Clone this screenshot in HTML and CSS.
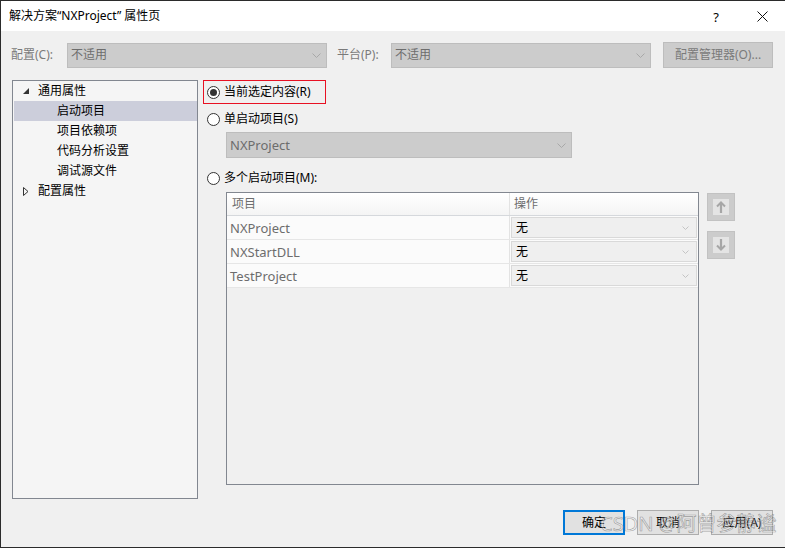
FILE: index.html
```html
<!DOCTYPE html>
<html lang="zh-CN">
<head>
<meta charset="utf-8">
<title>属性页</title>
<link rel="stylesheet" href="styles.css">
</head>
<body>
<div class="window">
  <div class="titlebar">
    <div class="title">解决方案“NXProject” 属性页</div>
    <div class="tb-btn help">?</div>
    <div class="tb-btn close"><svg width="11" height="11" viewBox="0 0 11 11"><path d="M0.5 0.5L10.5 10.5M10.5 0.5L0.5 10.5" stroke="#111" stroke-width="1" fill="none"/></svg></div>
  </div>

  <div class="toolbar">
    <span class="lbl lbl-config">配置(C):</span>
    <div class="combo combo-top"><span>不适用</span><svg class="chev" width="9" height="5" viewBox="0 0 9 5"><path d="M0.5 0.5L4.5 4.5L8.5 0.5" stroke="#a8a8a8" fill="none"/></svg></div>
    <span class="lbl lbl-platform">平台(P):</span>
    <div class="combo combo-top"><span>不适用</span><svg class="chev" width="9" height="5" viewBox="0 0 9 5"><path d="M0.5 0.5L4.5 4.5L8.5 0.5" stroke="#a8a8a8" fill="none"/></svg></div>
    <div class="btn-disabled">配置管理器(O)...</div>
  </div>

  <div class="main">
    <div class="tree">
      <div class="node">
        <span class="exp"><svg width="6" height="6" viewBox="0 0 6 6"><path d="M6 0L6 6L0 6Z" fill="#333"/></svg></span>
        <span>通用属性</span>
      </div>
      <div class="node child selected">启动项目</div>
      <div class="node child">项目依赖项</div>
      <div class="node child">代码分析设置</div>
      <div class="node child">调试源文件</div>
      <div class="node">
        <span class="exp"><svg width="6" height="9" viewBox="0 0 6 9"><path d="M0.5 0.5L5 4.5L0.5 8.5Z" fill="none" stroke="#333"/></svg></span>
        <span>配置属性</span>
      </div>
    </div>

    <div class="panel">
      <div class="red-box">
        <span class="radio checked"></span>
        <span class="radio-label">当前选定内容(R)</span>
      </div>
      <div class="radio-row row-single">
        <span class="radio"></span>
        <span class="radio-label">单启动项目(S)</span>
      </div>
      <div class="combo combo-project"><span>NXProject</span><svg class="chev" width="9" height="5" viewBox="0 0 9 5"><path d="M0.5 0.5L4.5 4.5L8.5 0.5" stroke="#a8a8a8" fill="none"/></svg></div>
      <div class="radio-row row-multi">
        <span class="radio"></span>
        <span class="radio-label">多个启动项目(M):</span>
      </div>

      <div class="grid-area">
        <div class="grid">
          <div class="grid-head">
            <div class="c1 hcell">项目</div>
            <div class="c2 hcell">操作</div>
          </div>
          <div class="grid-row">
            <div class="c1 cell">NXProject</div>
            <div class="c2 cell-combo"><div class="mini-combo"><span>无</span><svg width="7" height="4" viewBox="0 0 7 4"><path d="M0.5 0.5L3.5 3.5L6.5 0.5" stroke="#c4c4c4" fill="none"/></svg></div></div>
          </div>
          <div class="grid-row">
            <div class="c1 cell">NXStartDLL</div>
            <div class="c2 cell-combo"><div class="mini-combo"><span>无</span><svg width="7" height="4" viewBox="0 0 7 4"><path d="M0.5 0.5L3.5 3.5L6.5 0.5" stroke="#c4c4c4" fill="none"/></svg></div></div>
          </div>
          <div class="grid-row">
            <div class="c1 cell">TestProject</div>
            <div class="c2 cell-combo"><div class="mini-combo"><span>无</span><svg width="7" height="4" viewBox="0 0 7 4"><path d="M0.5 0.5L3.5 3.5L6.5 0.5" stroke="#c4c4c4" fill="none"/></svg></div></div>
          </div>
        </div>
        <div class="side-btns">
          <div class="arrow-btn"><span class="arrow-inner"><svg width="16" height="16" viewBox="0 0 16 16"><path d="M8 14V4" stroke="#a6a6a6" stroke-width="2.2" fill="none"/><path d="M4 7.5L8 3.5L12 7.5" stroke="#a6a6a6" stroke-width="2" fill="none"/></svg></span></div>
          <div class="arrow-btn"><span class="arrow-inner"><svg width="16" height="16" viewBox="0 0 16 16"><path d="M8 2V12" stroke="#a6a6a6" stroke-width="2.2" fill="none"/><path d="M4 8.5L8 12.5L12 8.5" stroke="#a6a6a6" stroke-width="2" fill="none"/></svg></span></div>
        </div>
      </div>
    </div>
  </div>

  <div class="footer">
    <div class="btn btn-default">确定</div>
    <div class="btn">取消</div>
    <div class="btn">应用(A)</div>
  </div>

  <div class="watermark">CSDN @阿曾参静谧</div>
</div>
</body>
</html>
```

FILE: styles.css
```css
* { box-sizing: border-box; }
html, body { margin: 0; padding: 0; }
body {
  font-family: "Noto Sans", "Noto Sans CJK SC", sans-serif;
  font-size: 12px;
  line-height: 16px;
  color: #000;
  background: #f0f0f0;
}
.window {
  position: relative;
  width: 785px;
  height: 548px;
  border-top: 1px solid #2b2b2b;
  border-left: 1px solid #2b2b2b;
  border-bottom: 1px solid #2b2b2b;
  background: #f0f0f0;
  display: flex;
  flex-direction: column;
  overflow: hidden;
}

/* title bar */
.titlebar {
  height: 30px;
  flex: none;
  background: #fff;
  display: flex;
  align-items: center;
}
.title { flex: 1; padding-left: 8px; color: #000; }
.tb-btn {
  width: 46px;
  height: 30px;
  display: flex;
  align-items: center;
  justify-content: center;
}
.help { font-size: 13px; padding-top: 1px; }

/* toolbar */
.toolbar {
  margin-top: 11px;
  height: 26px;
  flex: none;
  display: flex;
  align-items: center;
  padding-left: 10px;
}
.lbl { color: #7a7a7a; }
.lbl-config { width: 56px; }
.lbl-platform { width: 54px; margin-left: 10px; }
.combo {
  height: 25px;
  background: #cccccc;
  border: 1px solid #bdbdbd;
  color: #6d6d6d;
  display: flex;
  align-items: center;
  justify-content: space-between;
  padding: 0 5px 0 3px;
}
.combo-top { width: 260px; }
.btn-disabled {
  margin-left: 12px;
  width: 110px;
  height: 26px;
  background: #cccccc;
  border: 1px solid #bdbdbd;
  color: #7a7a7a;
  display: flex;
  align-items: center;
  justify-content: center;
}

/* main */
.main {
  margin-top: 12px;
  height: 419px;
  flex: none;
  display: flex;
}
.tree {
  margin-left: 11px;
  width: 186px;
  height: 419px;
  border: 1px solid #828790;
  background: #f5f5f5;
}
.node {
  height: 20px;
  display: flex;
  align-items: center;
  padding-left: 10px;
}
.exp {
  width: 15px;
  display: flex;
  align-items: center;
}
.node.child { padding-left: 44px; }
.node.selected {
  margin-left: 1px;
  padding-left: 43px;
  background: #cccedb;
}

.panel {
  margin-left: 5px;
  display: flex;
  flex-direction: column;
}
.red-box {
  width: 123px;
  height: 24px;
  border: 1px solid #e81123;
  display: flex;
  align-items: center;
  padding-left: 3px;
}
.radio {
  width: 13px;
  height: 13px;
  border: 1px solid #333;
  border-radius: 50%;
  background: #fff;
  display: flex;
  align-items: center;
  justify-content: center;
  flex: none;
}
.radio.checked::after {
  content: "";
  width: 7px;
  height: 7px;
  border-radius: 50%;
  background: #333;
}
.radio-label { margin-left: 4px; }
.radio-row {
  height: 20px;
  display: flex;
  align-items: center;
  padding-left: 4px;
}
.row-single { margin-top: 5px; }
.combo-project {
  margin-top: 3px;
  margin-left: 23px;
  width: 346px;
  height: 26px;
  font-size: 13px;
}
.row-multi { margin-top: 10px; }

.grid-area {
  margin-top: 4px;
  display: flex;
}
.grid {
  margin-left: 23px;
  width: 473px;
  height: 293px;
  border: 1px solid #828790;
  background: #f0f0f0;
}
.grid-head {
  height: 23px;
  display: flex;
  background: linear-gradient(#ffffff, #f4f4f4);
  border-bottom: 1px solid #d5d8dc;
}
.c1 { width: 283px; border-right: 1px solid #e3e3e3; }
.c2 { width: 188px; }
.hcell {
  display: flex;
  align-items: center;
  color: #6d6d6d;
}
.c1.hcell { padding-left: 5px; }
.c2.hcell { padding-left: 4px; }
.grid-row {
  height: 24px;
  display: flex;
  border-bottom: 1px solid #e6e6e6;
  background: #fbfbfb;
}
.cell {
  display: flex;
  align-items: center;
  padding-left: 3px;
  color: #6d6d6d;
  font-size: 13px;
}
.cell-combo { padding: 1px 1px 1px 1px; }
.mini-combo {
  height: 21px;
  border: 1px solid #d9d9d9;
  background: #efefef;
  display: flex;
  align-items: center;
  justify-content: space-between;
  padding: 0 7px 0 4px;
}

.side-btns {
  margin-left: 8px;
  margin-top: 1px;
  display: flex;
  flex-direction: column;
  gap: 10px;
}
.arrow-btn {
  width: 28px;
  height: 28px;
  background: #cccccc;
  border: 1px solid #c2c2c2;
  display: flex;
  align-items: center;
  justify-content: center;
}
.arrow-inner {
  width: 16px;
  height: 16px;
  background: #e4e4e4;
  display: flex;
}

/* footer */
.footer {
  margin-top: 11px;
  display: flex;
  justify-content: flex-end;
  gap: 12px;
  padding-right: 12px;
}
.btn {
  width: 62px;
  height: 25px;
  background: #e1e1e1;
  border: 1px solid #adadad;
  display: flex;
  align-items: center;
  justify-content: center;
}
.btn-default { border: 2px solid #0078d7; }

.watermark {
  position: absolute;
  left: 599px;
  top: 510px;
  font-size: 20px;
  line-height: 26px;
  color: rgba(255, 255, 255, 0.35);
  -webkit-text-stroke: 0.6px rgba(90, 90, 90, 0.55);
  white-space: nowrap;
}
```
